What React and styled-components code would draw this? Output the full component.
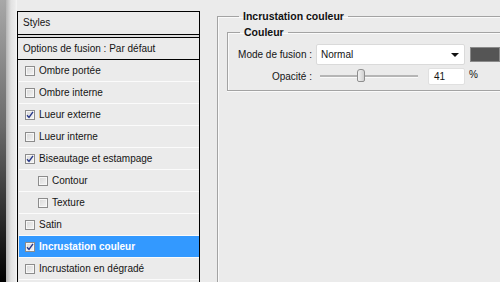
import React from "react";
import styled, { createGlobalStyle } from "styled-components";

const GlobalStyle = createGlobalStyle`
  html, body {
    margin: 0;
    padding: 0;
    overflow: hidden;
    background: #ebebeb;
  }
  body {
    font-family: "Liberation Sans", Arial, sans-serif;
    font-size: 10px;
    color: #141414;
  }
`;

const styles = [
  { label: "Ombre portée" },
  { label: "Ombre interne" },
  { label: "Lueur externe", checked: true },
  { label: "Lueur interne" },
  { label: "Biseautage et estampage", checked: true },
  { label: "Contour", nested: true },
  { label: "Texture", nested: true },
  { label: "Satin" },
  { label: "Incrustation couleur", checked: true, selected: true },
  { label: "Incrustation en dégradé" },
];

const Check = ({ checked }) => (
  <Box>
    {checked && (
      <svg width="8" height="8" viewBox="0 0 8 8">
        <path
          d="M1 4.2 L3 6.4 L7 0.8"
          fill="none"
          stroke="#27388a"
          strokeWidth="1.4"
        />
      </svg>
    )}
  </Box>
);

export default function App() {
  return (
    <>
      <GlobalStyle />
      <Page>
        <Strip />
        <Gutter />
        <StylesPanel>
          <HeadRow>Styles</HeadRow>
          <Spacer />
          <OptionsRow>Options de fusion : Par défaut</OptionsRow>
          {styles.map((s, i) => (
            <Row key={i} $selected={s.selected} $nested={s.nested}>
              <Check checked={s.checked} />
              <span>{s.label}</span>
            </Row>
          ))}
        </StylesPanel>
        <Settings>
          <Outer>
            <Legend>Incrustation couleur</Legend>
            <Inner>
              <Legend>Couleur</Legend>
              <FieldRow>
                <Label>Mode de fusion :</Label>
                <Select>
                  <span>Normal</span>
                  <Arrow />
                </Select>
                <Swatch />
              </FieldRow>
              <FieldRow $slim>
                <Label>Opacité :</Label>
                <Slider>
                  <Thumb style={{ left: "38%" }} />
                </Slider>
                <NumberBox>41</NumberBox>
                <Unit>%</Unit>
              </FieldRow>
            </Inner>
          </Outer>
        </Settings>
      </Page>
    </>
  );
}

const Page = styled.div`
  display: flex;
  align-items: flex-start;
  height: 282px;
  width: 500px;
  overflow: hidden;
`;

const Strip = styled.div`
  flex: none;
  width: 6px;
  height: 282px;
  background: linear-gradient(to bottom, #a8a8a8 0%, #6a6a6a 45%, #000 100%);
`;

const Gutter = styled.div`
  flex: none;
  width: 11px;
  height: 282px;
  background: linear-gradient(to right, #b4b4b4 0, #e2e2e2 5px, #ebebeb 9px, #f6f6f6 11px);
`;

const StylesPanel = styled.div`
  flex: none;
  margin-top: 11px;
  width: 180px;
  height: 300px;
  border: 1px solid #000;
  padding: 0 0 0 1px;
  background: #ebebeb;
`;

const HeadRow = styled.div`
  height: 22px;
  line-height: 22px;
  padding-left: 5px;
  border-bottom: 1px solid #000;
  margin-left: -1px;
`;

const Spacer = styled.div`
  height: 2px;
  margin-left: -1px;
  background: #dcdcdc;
`;

const OptionsRow = styled.div`
  height: 21px;
  line-height: 21px;
  padding-left: 5px;
  border-top: 1px solid #000;
  border-bottom: 1px solid #000;
  margin-left: -1px;
`;

const Row = styled.div`
  display: flex;
  align-items: center;
  gap: 4px;
  height: 21px;
  padding-left: ${(p) => (p.$nested ? "19px" : "6px")};
  border-bottom: 1px solid #fbfbfb;
  background: ${(p) => (p.$selected ? "#3399ff" : "transparent")};
  color: ${(p) => (p.$selected ? "#fff" : "inherit")};
  font-weight: ${(p) => (p.$selected ? "bold" : "normal")};
`;

const Box = styled.span`
  flex: none;
  width: 8px;
  height: 8px;
  border: 1px solid #8c8c8c;
  background: linear-gradient(135deg, #d8d8d8, #f4f4f4);
  box-shadow: inset 0 0 0 1px #f7f7f7;
  display: flex;
  align-items: center;
  justify-content: center;
`;

const Settings = styled.div`
  flex: 1;
  padding-left: 17px;
  padding-top: 10px;
`;

const Outer = styled.fieldset`
  margin: 0;
  width: 320px;
  min-height: 300px;
  padding: 4px 0 0 9px;
  border: 1px solid #a3a3a3;
  box-shadow: inset 1px 1px 0 #fafafa;
`;

const Legend = styled.legend`
  margin-left: 12px;
  padding: 0 4px;
  line-height: 12px;
  font-size: 10.5px;
  font-weight: bold;
  color: #111;
`;

const Inner = styled.fieldset`
  margin: 0;
  padding: 6px 0 6px 0;
  border: 1px solid #a3a3a3;
  box-shadow: inset 1px 1px 0 #fafafa, 0 1px 0 #fafafa;
`;

const FieldRow = styled.div`
  display: flex;
  align-items: center;
  height: ${(p) => (p.$slim ? "16px" : "21px")};
  margin-top: ${(p) => (p.$slim ? "3px" : "0")};
`;

const Label = styled.div`
  flex: none;
  width: 84px;
  text-align: right;
`;

const Select = styled.div`
  flex: none;
  margin-left: 4px;
  width: 138px;
  height: 19px;
  border: 1px solid #dadada;
  border-radius: 2px;
  background: #fff;
  display: flex;
  align-items: center;
  justify-content: space-between;
  padding: 0 5px 0 4px;
`;

const Arrow = styled.span`
  width: 0;
  height: 0;
  border-left: 4px solid transparent;
  border-right: 4px solid transparent;
  border-top: 4px solid #111;
`;

const Swatch = styled.div`
  flex: none;
  margin-left: 5px;
  width: 28px;
  height: 13px;
  background: #555555;
  border: 1px solid #8a8a8a;
`;

const Slider = styled.div`
  position: relative;
  flex: none;
  margin-left: 8px;
  width: 98px;
  height: 2px;
  background: #b5b5b5;
  border-bottom: 1px solid #fafafa;
`;

const Thumb = styled.span`
  position: absolute;
  top: -6px;
  width: 6px;
  height: 11px;
  border: 1px solid #8e8e8e;
  border-radius: 3px 3px 2px 2px;
  background: linear-gradient(to right, #f2f2f2, #d0d0d0);
`;

const NumberBox = styled.div`
  flex: none;
  margin-left: 10px;
  width: 30px;
  height: 15px;
  line-height: 15px;
  padding-left: 5px;
  background: #fff;
  border: 1px solid #e0e0e0;
  border-radius: 2px;
`;

const Unit = styled.div`
  margin-left: 4px;
  margin-top: -3px;
`;
